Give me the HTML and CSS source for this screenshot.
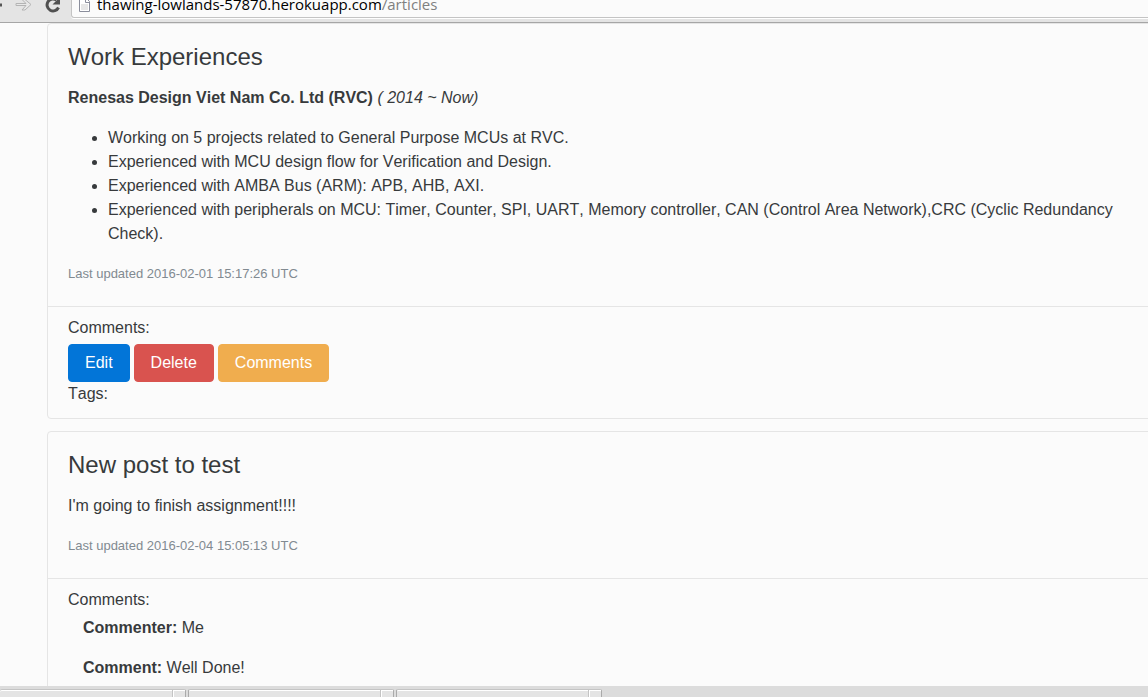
FILE: index.html
```
<!DOCTYPE html>
<html lang="en">
<head>
<meta charset="utf-8">
<title>Articles</title>
<link rel="stylesheet" href="styles.css">
</head>
<body>
<header class="toolbar">
  <div class="nav">
    <svg class="nav-icons" width="71" height="17" viewBox="0 0 71 17" aria-hidden="true">
      <path d="M0 5h2" stroke="#555" stroke-width="3"/>
      <path d="M16 3.500h10l-4-4h3l6 5-6 5.500h-3l4-4.500H16z" fill="#e8e8e8" stroke="#b4b4b4"/>
      <path d="M58.500 7.500a6 6 0 1 1-2-7.500" fill="none" stroke="#505050" stroke-width="3"/>
      <path d="M60 -3v7.500h-7.500z" fill="#505050"/>
    </svg>
  </div>
  <div class="address">
    <svg class="page-icon" width="12" height="13" viewBox="0 0 12 13" aria-hidden="true">
      <path d="M.500-3v14.500h10V1.500L7-2" fill="#fff" stroke="#8b8e9c"/>
      <path d="M6.500-1v3.500h4" fill="none" stroke="#8b8e9c"/>
      <path d="M2 4h7v6H2z" fill="#e6e6e6"/>
    </svg>
    <span class="url">thawing-lowlands-57870.herokuapp.com<span class="path">/articles</span></span>
  </div>
</header>
<main class="page">
  <article class="card">
    <div class="card-block">
      <h4 class="title">Work Experiences</h4>
      <p class="text"><strong>Renesas Design Viet Nam Co. Ltd (RVC)</strong> <em>( 2014 ~ Now)</em></p>
      <ul class="list">
        <li>Working on 5 projects related to General Purpose MCUs at RVC.</li>
        <li>Experienced with MCU design flow for Verification and Design.</li>
        <li>Experienced with AMBA Bus (ARM): APB, AHB, AXI.</li>
        <li>Experienced with peripherals on MCU: Timer, Counter, SPI, UART, Memory controller, CAN (Control Area Network),CRC (Cyclic Redundancy Check).</li>
      </ul>
      <p class="updated">Last updated 2016-02-01 15:17:26 UTC</p>
    </div>
    <div class="card-footer">
      <div>Comments:</div>
      <div class="actions">
        <button class="btn edit" type="button">Edit</button>
        <button class="btn delete" type="button">Delete</button>
        <button class="btn comments" type="button">Comments</button>
      </div>
      <div>Tags:</div>
    </div>
  </article>
  <article class="card">
    <div class="card-block">
      <h4 class="title">New post to test</h4>
      <p class="text">I'm going to finish assignment!!!!</p>
      <p class="updated">Last updated 2016-02-04 15:05:13 UTC</p>
    </div>
    <div class="card-footer">
      <div>Comments:</div>
      <div class="comment">
        <p class="text"><strong>Commenter:</strong> Me</p>
        <p class="text"><strong>Comment:</strong> Well Done!</p>
      </div>
    </div>
  </article>
</main>
<footer class="downloads">
  <div class="download first"><span class="more"></span></div>
  <div class="download"><span class="more"></span></div>
  <div class="download"><span class="more"></span></div>
</footer>
</body>
</html>
```
FILE: styles.css
```
* { box-sizing: border-box; }
body {
  margin: 0;
  height: 100vh;
  display: flex;
  flex-direction: column;
  overflow: hidden;
  background: #fbfbfb;
  color: #373a3c;
  font: 16px/24px "Liberation Sans", Arial, sans-serif;
  font-kerning: none;
}
.toolbar {
  flex: none;
  display: flex;
  align-items: flex-start;
  height: 23px;
  background: #e4e4e4;
  border-bottom: 1px solid #a6a6a6;
}
.nav { flex: none; width: 71px; height: 17px; overflow: hidden; }
.nav-icons, .page-icon { display: block; flex: none; }
.address {
  flex: 1;
  display: flex;
  gap: 6px;
  height: 18px;
  padding-left: 7px;
  background: #fbfbfb;
  border: solid #c4c4c4;
  border-width: 0 0 1px 1px;
  border-bottom-left-radius: 3px;
  box-shadow: 0 1px #fff;
}
.url {
  color: #000;
  font: 15px/8px "Open Sans", "Noto Sans", sans-serif;
  font-kerning: none;
}
.path { color: #808080; }
.page {
  flex: 1;
  min-height: 0;
  overflow: hidden;
  padding-left: 47px;
}
.card {
  margin: 0 -20px 12px 0;
  border: 1px solid #e5e5e5;
  border-radius: 4px;
}
.card-block { padding: 20px; }
.title { margin: 0 0 16px; font-size: 24px; line-height: 26px; font-weight: 400; }
.text { margin: 0 0 16px; }
.list { margin: 0 0 16px; padding-left: 40px; }
.updated { margin: 0; color: #818a91; font-size: 13px; line-height: 24px; }
.card-footer { padding: 9px 20px 12px; border-top: 1px solid #e5e5e5; }
.actions { display: flex; gap: 4px; padding-top: 4px; }
.btn {
  padding: 6px 16px;
  border: 1px solid transparent;
  border-radius: 4px;
  color: #fff;
  font: inherit;
}
.edit { background: #0275d8; border-color: #0275d8; }
.delete { background: #d9534f; border-color: #d9534f; }
.comments { background: #f0ad4e; border-color: #f0ad4e; }
.comment { padding: 4px 15px; }
.downloads {
  flex: none;
  display: flex;
  gap: 2px;
  height: 11px;
  padding-top: 3px;
  background: #dcdcdc;
}
.download {
  display: flex;
  justify-content: flex-end;
  width: 206px;
  background: #e4e4e4;
  border: solid #aaa;
  border-width: 1px 1px 0;
  border-top-color: #c4c4c4;
  border-radius: 2px 2px 0 0;
  box-shadow: inset 0 1px #fff;
}
.first { width: 186px; border-left: 0; }
.more { width: 13px; border-left: 1px solid #c4c4c4; box-shadow: inset 1px 1px #fff; }
```
